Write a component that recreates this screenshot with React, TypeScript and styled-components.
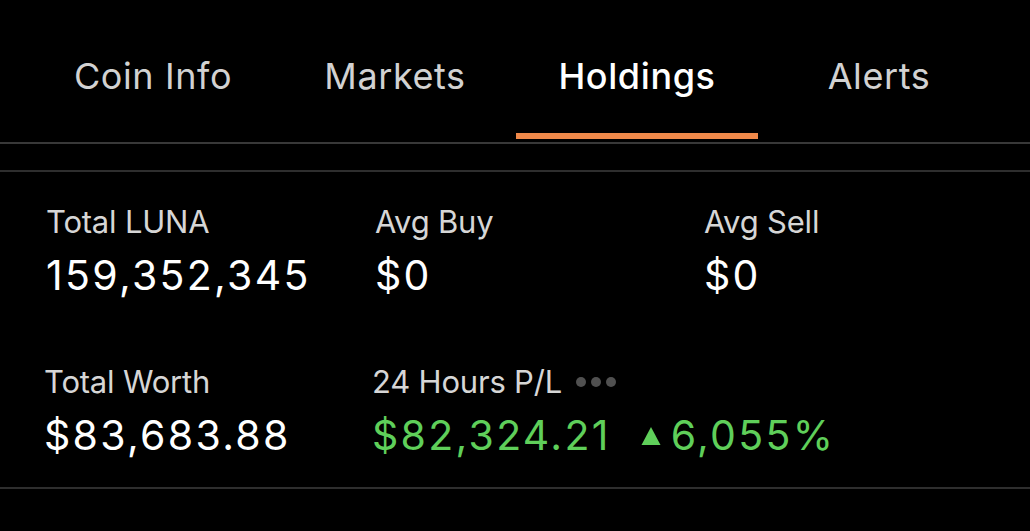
import styled, { createGlobalStyle } from "styled-components";

const GlobalStyle = createGlobalStyle`
  html, body {
    margin: 0;
    padding: 0;
    background: #000000;
  }
  body {
    font-family: Inter, "Noto Sans", "Liberation Sans", sans-serif;
    -webkit-font-smoothing: antialiased;
  }
`;

const Screen = styled.div`
  background: #000000;
  height: 531px;
  overflow: hidden;
  width: 1030px;
`;

const TabBar = styled.div`
  border-bottom: 2px solid #383838;
  display: grid;
  grid-template-columns: repeat(4, 242px);
  padding-left: 32px;
`;

const Tab = styled.div`
  align-items: center;
  display: flex;
  flex-direction: column;
  padding-top: 54px;
`;

const TabLabel = styled.span<{ $active?: boolean }>`
  color: ${(p) => (p.$active ? "#ffffff" : "#d2d2d2")};
  font-size: 36px;
  font-weight: ${(p) => (p.$active ? 500 : 400)};
  letter-spacing: 0.6px;
  line-height: 44px;
  margin-bottom: 35px;
`;

const Underline = styled.div<{ $active?: boolean }>`
  background: ${(p) => (p.$active ? "#f0894a" : "transparent")};
  height: 6px;
  margin-bottom: 3px;
  width: 100%;
`;

const Band = styled.div`
  border-bottom: 2px solid #2e2e2e;
  height: 26px;
`;

const StatsGrid = styled.div`
  border-bottom: 2px solid #2e2e2e;
  display: grid;
  grid-template-columns: repeat(3, 329px);
  padding: 31px 0 28px 46px;
  row-gap: 64px;
`;

const Stat = styled.div<{ $span?: number; $shift?: number }>`
  display: flex;
  flex-direction: column;
  gap: 10px;
  grid-column: span ${(p) => p.$span ?? 1};
  margin-left: ${(p) => p.$shift ?? 0}px;
`;

const Label = styled.div`
  align-items: center;
  color: #d6d6d6;
  display: flex;
  font-size: 31px;
  gap: 14px;
  letter-spacing: -0.2px;
  line-height: 38px;
  white-space: nowrap;
`;

const Value = styled.div<{ $positive?: boolean }>`
  align-items: center;
  color: ${(p) => (p.$positive ? "#5fcf5a" : "#ffffff")};
  display: flex;
  font-size: 41px;
  letter-spacing: 2.3px;
  line-height: 48px;
  white-space: nowrap;
`;

const Dots = styled.span`
  display: flex;
  gap: 5px;

  & > i {
    background: #505050;
    border-radius: 50%;
    display: block;
    height: 10px;
    width: 10px;
  }
`;

const Change = styled.span`
  align-items: center;
  display: flex;
  gap: 10px;
  margin-left: 30px;
`;

const Triangle = styled.svg`
  display: block;
  margin-top: 2px;
`;

const tabs = ["Coin Info", "Markets", "Holdings", "Alerts"];

export default function App() {
  return (
    <Screen>
      <GlobalStyle />
      <TabBar>
        {tabs.map((t) => (
          <Tab key={t}>
            <TabLabel $active={t === "Holdings"}>{t}</TabLabel>
            <Underline $active={t === "Holdings"} />
          </Tab>
        ))}
      </TabBar>
      <Band />
      <StatsGrid>
        <Stat>
          <Label>Total LUNA</Label>
          <Value>159,352,345</Value>
        </Stat>
        <Stat>
          <Label>Avg Buy</Label>
          <Value>$0</Value>
        </Stat>
        <Stat>
          <Label>Avg Sell</Label>
          <Value>$0</Value>
        </Stat>
        <Stat $shift={-2}>
          <Label>Total Worth</Label>
          <Value>$83,683.88</Value>
        </Stat>
        <Stat $span={2} $shift={-3}>
          <Label>
            24 Hours P/L
            <Dots>
              <i />
              <i />
              <i />
            </Dots>
          </Label>
          <Value $positive>
            $82,324.21
            <Change>
              <Triangle width="20" height="20" viewBox="0 0 20 20">
                <path d="M10 1 L19.5 19 L0.5 19 Z" fill="#5fcf5a" />
              </Triangle>
              6,055%
            </Change>
          </Value>
        </Stat>
      </StatsGrid>
    </Screen>
  );
}
